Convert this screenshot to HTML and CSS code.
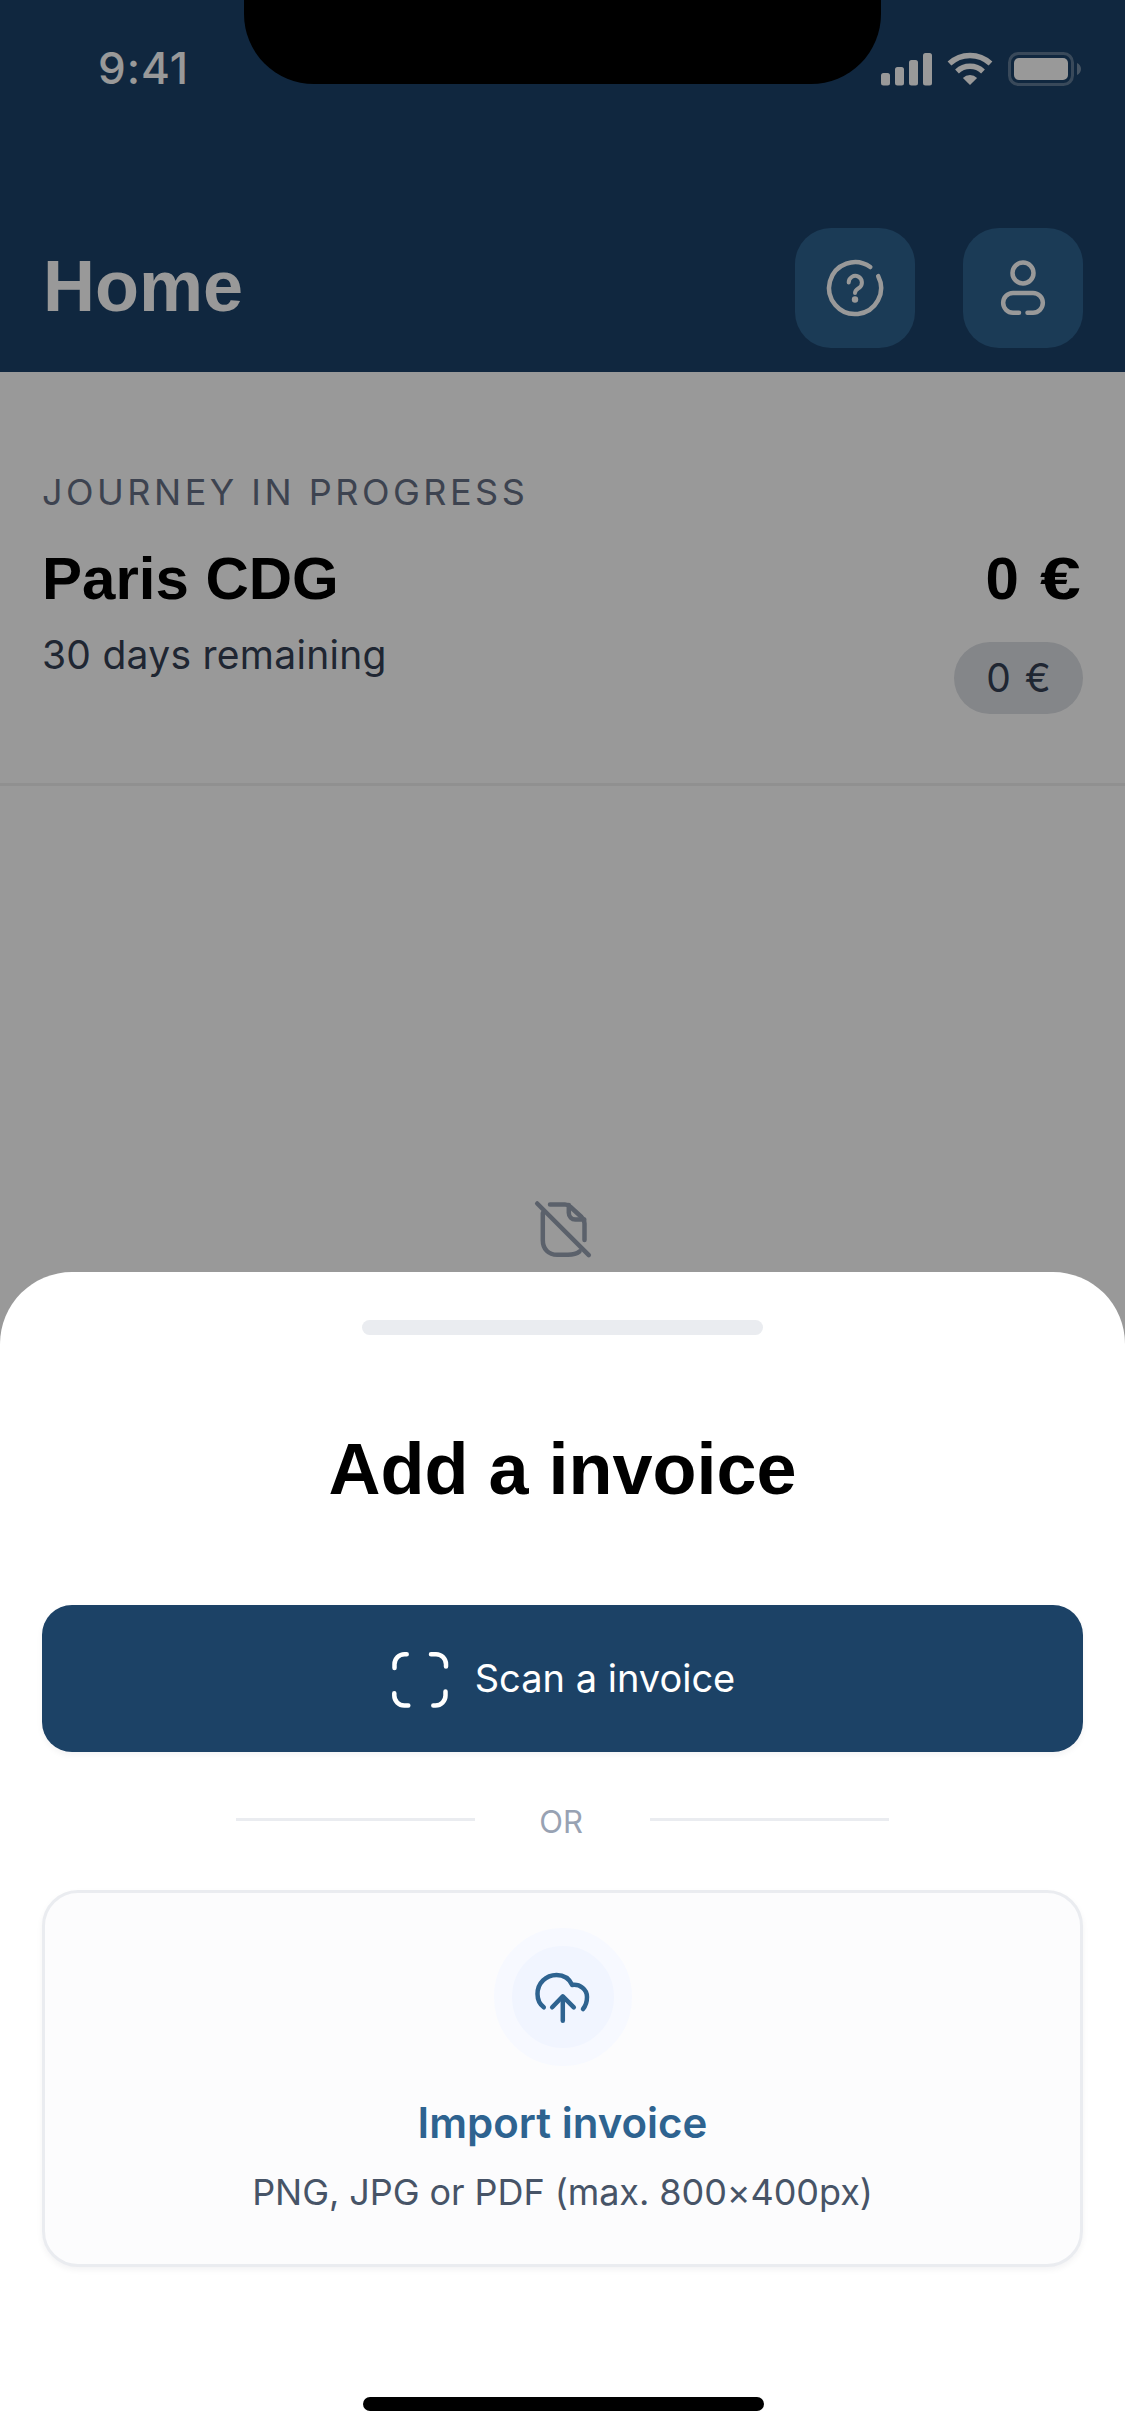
FILE: index.html
```html
<!DOCTYPE html>
<html lang="en">
<head>
<meta charset="utf-8">
<title>Home</title>
<link rel="stylesheet" href="styles.css">
</head>
<body>
<div class="screen">
  <header class="header">
    <div class="status">
      <span class="time">9:41</span>
      <div class="status-icons">
        <svg class="ic-signal" width="51" height="33" viewBox="0 0 51 33"><rect x="0" y="20" width="9" height="12.5" rx="2.5"/><rect x="14" y="14" width="9" height="18.5" rx="2.5"/><rect x="28" y="7" width="9" height="25.5" rx="2.5"/><rect x="42" y="0" width="9" height="32.5" rx="2.5"/></svg>
        <svg class="ic-wifi" width="46" height="33" viewBox="0 0 46 33"><path class="arc" d="M2.5 11.5A30 30 0 0 1 43.5 11.5"/><path class="arc" d="M10 19.5A19 19 0 0 1 36 19.5"/><path d="M23 33L15.9 25.9A10 10 0 0 1 30.1 25.9Z"/></svg>
        <svg class="ic-batt" width="73" height="34" viewBox="0 0 73 34"><rect class="batt-shell" x="1.5" y="1.5" width="63" height="31" rx="9"/><rect x="6" y="6" width="54" height="22" rx="5"/><path class="batt-cap" d="M69 11v12c2.500-1 4-3.500 4-6s-1.500-5-4-6z"/></svg>
      </div>
    </div>
    <div class="bar">
      <h1 class="page-title">Home</h1>
      <div class="bar-actions">
        <button class="icon-btn" type="button" aria-label="Help">
          <svg class="line-icon" width="72" height="72" viewBox="0 0 72 72"><path d="M59.200 24.200A26 26 0 1 1 51.300 15"/><path class="thin" d="M29.700 30.500a6.600 6.600 0 1 1 10.400 5.400c-2.200 1.500-4.100 2.600-4.100 5"/><circle class="dot" cx="36" cy="47.500" r="3.200"/></svg>
        </button>
        <button class="icon-btn" type="button" aria-label="Profile">
          <svg class="line-icon" width="72" height="72" viewBox="0 0 72 72"><circle cx="36" cy="21" r="10.500"/><path d="M32 60.700H26a9.850 9.850 0 0 1 0-19.700H46a9.850 9.850 0 0 1 0 19.700H40.500"/></svg>
        </button>
      </div>
    </div>
  </header>

  <section class="journey">
    <div class="journey-left">
      <p class="eyebrow">JOURNEY IN PROGRESS</p>
      <p class="journey-name">Paris CDG</p>
      <p class="journey-sub">30 days remaining</p>
    </div>
    <div class="journey-right">
      <p class="journey-name journey-amount">0 <span class="euro">€</span></p>
      <span class="chip">0 €</span>
    </div>
  </section>

  <section class="empty">
    <svg class="line-icon empty-icon" width="72" height="72" viewBox="0 0 72 72"><path d="M10.200 10.500L61.800 62.200"/><path d="M23 11.500H38c2 0 3.500.5 5 2L54.500 24c2 2 3 3.500 3 6.500V47"/><path d="M41.800 12V19.800c0 4 3 6.700 6.500 6.700h9"/><path d="M15.800 20V47c0 9 5.500 14.800 14.500 14.800H41c4.500 0 8.500-.8 11.500-3.300"/></svg>
  </section>

  <div class="scrim"></div>
  <div class="notch"></div>

  <section class="sheet">
    <div class="handle"></div>
    <h2 class="sheet-title">Add a invoice</h2>
    <button class="scan-btn" type="button">
      <svg class="line-icon scan-icon" width="72" height="72" viewBox="0 0 72 72"><path d="M22.700 10.200H20.500a10 10 0 0 0-10 10V24"/><path d="M47 10.200h5a10 10 0 0 1 10 10V22.500"/><path d="M10.300 49.200V51.500a10 10 0 0 0 10 10H24.300"/><path d="M61.500 47.500V51.500a10 10 0 0 1-10 10H49.300"/></svg>
      <span class="scan-label">Scan a invoice</span>
    </button>
    <div class="or"><span class="or-line"></span><span class="or-text">OR</span><span class="or-line"></span></div>
    <div class="import">
      <div class="halo">
        <svg class="line-icon cloud-icon" width="72" height="72" viewBox="0 0 72 72"><path d="M16.800 46.300C12.500 43 10.500 38.500 10.500 33C10.500 22 19 14 29.500 14C37 14 42.500 18 45.200 24C53 23 60 28.500 60 36C60 41 58.500 45 56 48"/><path d="M35.800 59.700V36.300"/><path d="M25.200 46.300L35.800 35.300L46.800 46.300"/></svg>
      </div>
      <p class="import-title">Import invoice</p>
      <p class="import-sub">PNG, JPG or PDF (max. 800×400px)</p>
    </div>
    <div class="home-indicator"></div>
  </section>
</div>
</body>
</html>
```
FILE: styles.css
```css
* { box-sizing: border-box; }
html, body { margin: 0; padding: 0; background: #fff; }
p, h1, h2 { margin: 0; }
button { border: 0; padding: 0; font: inherit; }

.screen {
  position: relative;
  width: 1125px;
  height: 2436px;
  overflow: hidden;
  background: #fff;
  font-family: Inter, "Liberation Sans", sans-serif;
}

.header {
  height: 372px;
  padding: 0 42px 24px 42px;
  background: #1c4269;
  display: flex;
  flex-direction: column;
  color: #fff;
}
.status {
  height: 228px;
  padding: 40px 2px 0 56px;
  display: flex;
  justify-content: space-between;
  align-items: flex-start;
}
.time { font-size: 44px; line-height: 56px; font-weight: 500; letter-spacing: 1px; }
.status-icons { display: flex; align-items: flex-start; gap: 15px; padding-top: 12px; }
.status-icons svg { fill: #fff; display: block; }
.ic-signal { margin-top: 0.5px; }
.arc { fill: none; stroke: #fff; stroke-width: 5.5; }
.batt-shell { fill: none; stroke: #fff; stroke-opacity: .3; stroke-width: 3; }
.batt-cap { opacity: .4; }

.bar { display: flex; align-items: center; justify-content: space-between; height: 120px; }
.page-title {
  font-family: "Liberation Sans", Arial, sans-serif;
  font-size: 72px;
  line-height: 116px;
  font-weight: 700;
  margin: 0 0 4px 1px;
}
.bar-actions { display: flex; gap: 48px; }
.icon-btn {
  width: 120px;
  height: 120px;
  border-radius: 36px;
  background: #2e6390;
  display: flex;
  align-items: center;
  justify-content: center;
}

.line-icon {
  display: block;
  fill: none;
  stroke: #fff;
  stroke-width: 4.500;
  stroke-linecap: round;
  stroke-linejoin: round;
}
.line-icon .thin { stroke-width: 4; }
.line-icon .dot { fill: #fff; stroke: none; }

.journey {
  height: 414px;
  padding: 96px 42px 0 42px;
  border-bottom: 3px solid #f0f0f0;
  display: flex;
  justify-content: space-between;
}
.eyebrow {
  font-size: 36px;
  line-height: 48px;
  letter-spacing: 3.5px;
  color: #667085;
}
.journey-name {
  font-family: "Liberation Sans", Arial, sans-serif;
  font-size: 60px;
  line-height: 72px;
  font-weight: 700;
  color: #000;
}
.journey-left .journey-name { margin-top: 27px; }
.journey-amount { word-spacing: 4px; margin-right: 3px; }
.euro { display: inline-block; margin-right: 7px; transform: scaleX(1.22); transform-origin: 0 50%; }
.journey-sub {
  margin-top: 13px;
  font-size: 39px;
  line-height: 54px;
  letter-spacing: .27px;
  color: #344054;
}
.journey-right {
  padding-top: 75px;
  display: flex;
  flex-direction: column;
  align-items: flex-end;
  gap: 27px;
}
.chip {
  width: 129px;
  height: 72px;
  border-radius: 36px;
  background: #dcdfe4;
  color: #344054;
  font-size: 39px;
  line-height: 72px;
  word-spacing: 3px;
  text-align: center;
}

.empty { display: flex; justify-content: center; padding-top: 407px; }
.empty-icon { stroke: #98a2b3; }

.scrim { position: absolute; inset: 0; background: rgba(0, 0, 0, .4); }
.notch {
  position: absolute;
  left: 244px;
  top: 0;
  width: 637px;
  height: 84px;
  background: #000;
  border-radius: 0 0 70px 70px;
}

.sheet {
  position: absolute;
  left: 0;
  right: 0;
  bottom: 0;
  height: 1164px;
  padding: 48px 42px 0 42px;
  background: #fff;
  border-radius: 72px 72px 0 0;
  display: flex;
  flex-direction: column;
  align-items: center;
}
.handle { width: 401px; height: 15px; border-radius: 8px; background: #eaecf0; flex: none; }
.sheet-title {
  margin-top: 86px;
  font-family: "Liberation Sans", Arial, sans-serif;
  font-size: 72px;
  line-height: 96px;
  font-weight: 700;
  color: #000;
}
.scan-btn {
  margin-top: 88px;
  width: 1041px;
  height: 147px;
  flex: none;
  padding-left: 3px;
  border-radius: 30px;
  background: #1c4266;
  box-shadow: 0 3px 6px rgba(16, 24, 40, .05);
  color: #fff;
  display: flex;
  align-items: center;
  justify-content: center;
  gap: 19px;
  font-size: 38px;
}
.scan-icon { margin-left: -9px; margin-top: 3px; }
.scan-label { margin-bottom: 2px; }
.or {
  margin-top: 49px;
  height: 42px;
  flex: none;
  display: flex;
  align-items: flex-start;
}
.or-line { width: 239px; height: 3px; margin-top: 17px; background: #eaecf0; }
.or-text {
  width: 175px;
  padding-right: 3px;
  text-align: center;
  font-size: 31px;
  line-height: 42px;
  color: #98a2b3;
}
.import {
  margin-top: 47px;
  width: 1041px;
  height: 377px;
  flex: none;
  border: 3px solid #eaecf0;
  border-radius: 36px;
  background: #fcfcfd;
  box-shadow: 0 3px 6px rgba(16, 24, 40, .05);
  padding-top: 35px;
  display: flex;
  flex-direction: column;
  align-items: center;
}
.halo {
  width: 138px;
  height: 138px;
  flex: none;
  border-radius: 50%;
  background: #f1f5ff;
  border: 18px solid #f7f9ff;
  display: flex;
  align-items: center;
  justify-content: center;
}
.cloud-icon { stroke: #2e6390; flex: none; }
.import-title {
  margin-top: 30px;
  font-size: 42px;
  line-height: 54px;
  font-weight: 600;
  color: #2e6390;
}
.import-sub {
  margin-top: 15px;
  font-size: 36px;
  line-height: 54px;
  letter-spacing: -.07px;
  color: #475467;
}
.home-indicator {
  margin: 130px 0 0 2px;
  width: 401px;
  height: 14px;
  flex: none;
  border-radius: 7px;
  background: #000;
}
```
